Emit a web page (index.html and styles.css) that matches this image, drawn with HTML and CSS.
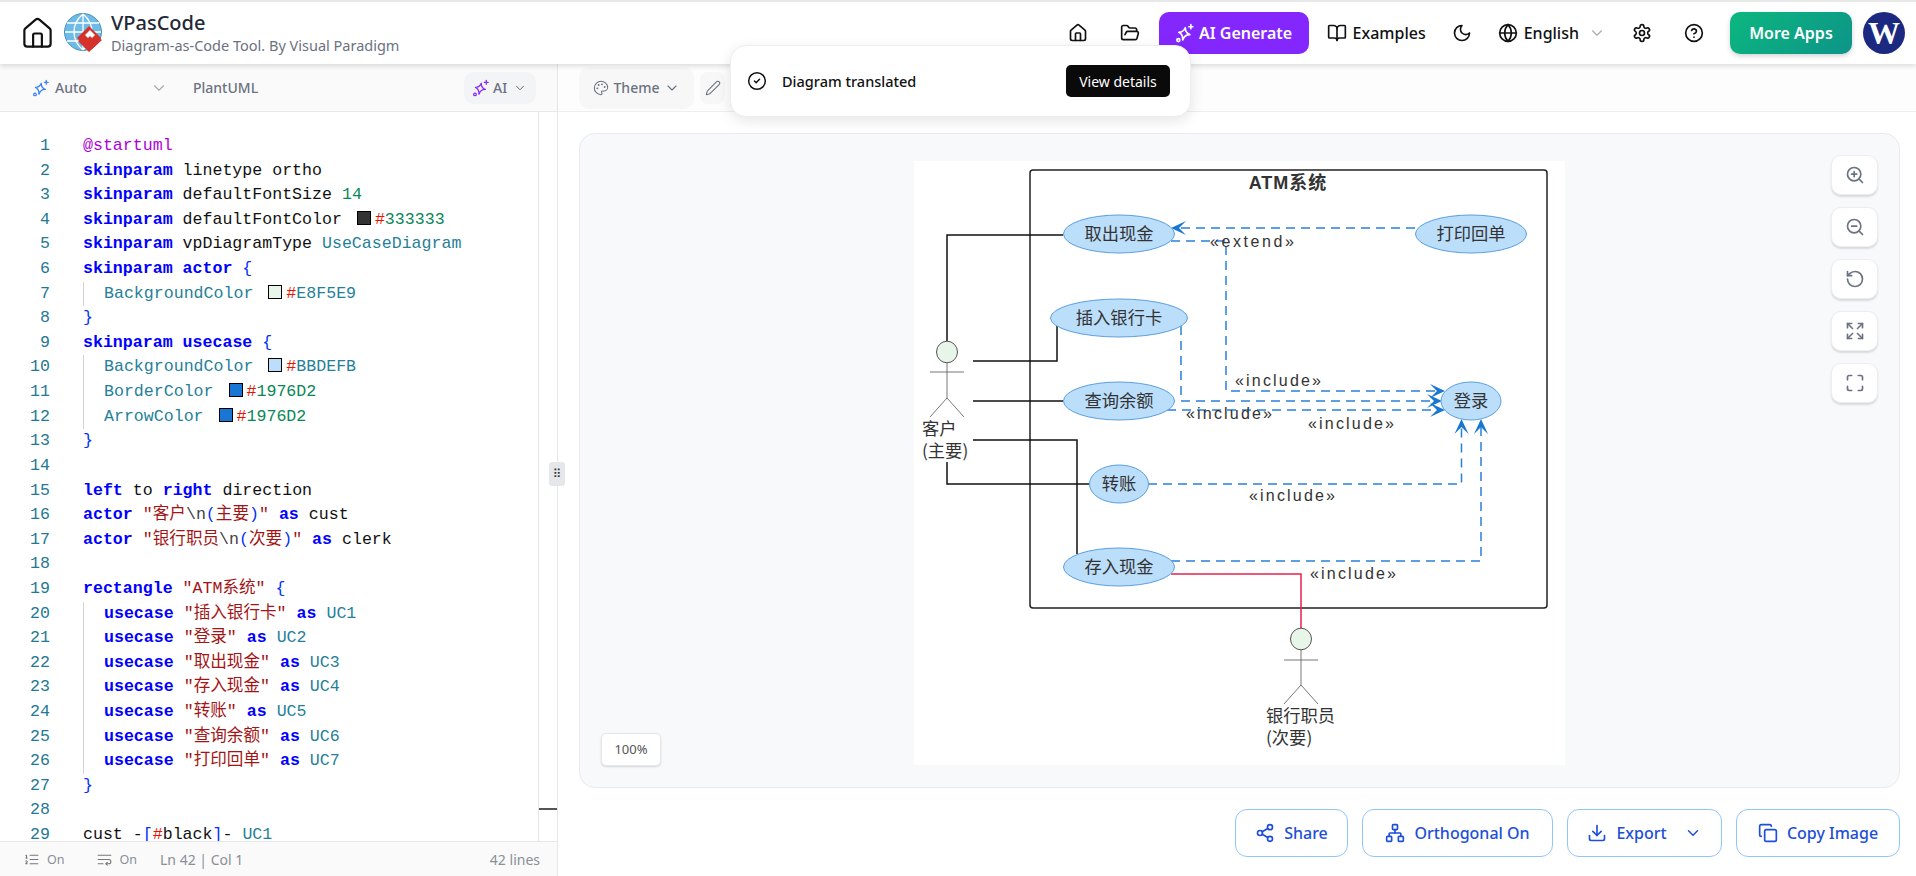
FILE: index.html
```html
<!DOCTYPE html>
<html lang="en">
<head>
    <meta charset="UTF-8">
    <meta name="viewport" content="width=device-width, initial-scale=1.0">
    <title>VPasCode</title>
    <link rel="stylesheet" href="styles.css">
</head>
<body>
    <svg class="sprite" xmlns="http://www.w3.org/2000/svg">
        <symbol id="i-house" viewBox="0 0 24 24"><path d="M15 21v-8a1 1 0 0 0-1-1h-4a1 1 0 0 0-1 1v8"/><path d="M3 10a2 2 0 0 1 .709-1.528l7-5.999a2 2 0 0 1 2.582 0l7 5.999A2 2 0 0 1 21 10v9a2 2 0 0 1-2 2H5a2 2 0 0 1-2-2z"/></symbol>
        <symbol id="i-folder" viewBox="0 0 24 24"><path d="m6 14 1.5-2.9A2 2 0 0 1 9.24 10H20a2 2 0 0 1 1.94 2.5l-1.54 6a2 2 0 0 1-1.95 1.5H4a2 2 0 0 1-2-2V5a2 2 0 0 1 2-2h3.9a2 2 0 0 1 1.69.9l.81 1.2a2 2 0 0 0 1.67.9H18a2 2 0 0 1 2 2v2"/></symbol>
        <symbol id="i-spark" viewBox="0 0 24 24"><path d="M11 5.5c.8 4.300 2.700 6.200 7 7-4.300.8-6.200 2.700-7 8-.8-5.300-2.700-7.200-6.500-8 3.800-.8 5.700-2.700 6.500-7z" transform="rotate(12 11 12)"/><path d="M19 2v5"/><path d="M16.500 4.500h5"/><circle cx="4" cy="20.500" r="1.800"/></symbol>
        <symbol id="i-book" viewBox="0 0 24 24"><path d="M12 7v14"/><path d="M3 18a1 1 0 0 1-1-1V4a1 1 0 0 1 1-1h5a4 4 0 0 1 4 4 4 4 0 0 1 4-4h5a1 1 0 0 1 1 1v13a1 1 0 0 1-1 1h-6a3 3 0 0 0-3 3 3 3 0 0 0-3-3z"/></symbol>
        <symbol id="i-moon" viewBox="0 0 24 24"><path d="M12 3a6 6 0 0 0 9 9 9 9 0 1 1-9-9Z"/></symbol>
        <symbol id="i-globe" viewBox="0 0 24 24"><circle cx="12" cy="12" r="10"/><path d="M12 2a14.500 14.500 0 0 0 0 20 14.500 14.500 0 0 0 0-20"/><path d="M2 12h20"/></symbol>
        <symbol id="i-gear" viewBox="0 0 24 24"><path d="M12.220 2h-.44a2 2 0 0 0-2 2v.18a2 2 0 0 1-1 1.730l-.43.25a2 2 0 0 1-2 0l-.15-.08a2 2 0 0 0-2.730.73l-.22.38a2 2 0 0 0 .73 2.730l.15.1a2 2 0 0 1 1 1.720v.51a2 2 0 0 1-1 1.740l-.15.09a2 2 0 0 0-.73 2.730l.22.38a2 2 0 0 0 2.730.73l.15-.08a2 2 0 0 1 2 0l.43.25a2 2 0 0 1 1 1.730V20a2 2 0 0 0 2 2h.44a2 2 0 0 0 2-2v-.18a2 2 0 0 1 1-1.730l.43-.25a2 2 0 0 1 2 0l.15.08a2 2 0 0 0 2.730-.73l.22-.39a2 2 0 0 0-.73-2.730l-.15-.08a2 2 0 0 1-1-1.740v-.5a2 2 0 0 1 1-1.740l.15-.09a2 2 0 0 0 .73-2.730l-.22-.38a2 2 0 0 0-2.730-.73l-.15.08a2 2 0 0 1-2 0l-.43-.25a2 2 0 0 1-1-1.730V4a2 2 0 0 0-2-2z"/><circle cx="12" cy="12" r="3"/></symbol>
        <symbol id="i-help" viewBox="0 0 24 24"><circle cx="12" cy="12" r="10"/><path d="M9.090 9a3 3 0 0 1 5.830 1c0 2-3 3-3 3"/><path d="M12 17h.01"/></symbol>
        <symbol id="i-chev" viewBox="0 0 24 24"><path d="m6 9 6 6 6-6"/></symbol>
        <symbol id="i-palette" viewBox="0 0 24 24"><circle cx="13.500" cy="6.500" r=".6"/><circle cx="17.500" cy="10.500" r=".6"/><circle cx="8.500" cy="7.500" r=".6"/><circle cx="6.500" cy="12.500" r=".6"/><path d="M12 2C6.500 2 2 6.500 2 12s4.500 10 10 10c.926 0 1.648-.746 1.648-1.688 0-.437-.18-.835-.437-1.125-.29-.289-.438-.652-.438-1.125a1.640 1.640 0 0 1 1.668-1.668h1.996c3.051 0 5.555-2.503 5.555-5.554C21.965 6.012 17.461 2 12 2z"/></symbol>
        <symbol id="i-pencil" viewBox="0 0 24 24"><path d="M21.174 6.812a1 1 0 0 0-3.986-3.987L3.842 16.174a2 2 0 0 0-.5.83l-1.321 4.352a.5.5 0 0 0 .623.622l4.353-1.320a2 2 0 0 0 .83-.497z"/></symbol>
        <symbol id="i-check" viewBox="0 0 24 24"><circle cx="12" cy="12" r="10"/><path d="m9 12 2 2 4-4"/></symbol>
        <symbol id="i-zoomin" viewBox="0 0 24 24"><circle cx="11" cy="11" r="8"/><path d="m21 21-4.300-4.300"/><path d="M11 8v6"/><path d="M8 11h6"/></symbol>
        <symbol id="i-zoomout" viewBox="0 0 24 24"><circle cx="11" cy="11" r="8"/><path d="m21 21-4.300-4.300"/><path d="M8 11h6"/></symbol>
        <symbol id="i-rotate" viewBox="0 0 24 24"><path d="M3 12a9 9 0 1 0 9-9 9.750 9.750 0 0 0-6.740 2.740L3 8"/><path d="M3 3v5h5"/></symbol>
        <symbol id="i-fit" viewBox="0 0 24 24"><path d="M3 3l6 6"/><path d="M3 8V3h5"/><path d="M21 3l-6 6"/><path d="M16 3h5v5"/><path d="M3 21l6-6"/><path d="M3 16v5h5"/><path d="M21 21l-6-6"/><path d="M21 16v5h-5"/></symbol>
        <symbol id="i-full" viewBox="0 0 24 24"><path d="M8 3H5a2 2 0 0 0-2 2v3"/><path d="M21 8V5a2 2 0 0 0-2-2h-3"/><path d="M3 16v3a2 2 0 0 0 2 2h3"/><path d="M16 21h3a2 2 0 0 0 2-2v-3"/></symbol>
        <symbol id="i-share" viewBox="0 0 24 24"><circle cx="18" cy="5" r="3"/><circle cx="6" cy="12" r="3"/><circle cx="18" cy="19" r="3"/><path d="m8.590 13.510 6.830 3.980"/><path d="m15.410 6.510-6.820 3.980"/></symbol>
        <symbol id="i-network" viewBox="0 0 24 24"><rect x="16" y="16" width="6" height="6" rx="1"/><rect x="2" y="16" width="6" height="6" rx="1"/><rect x="9" y="2" width="6" height="6" rx="1"/><path d="M5 16v-3a1 1 0 0 1 1-1h12a1 1 0 0 1 1 1v3"/><path d="M12 12V8"/></symbol>
        <symbol id="i-download" viewBox="0 0 24 24"><path d="M21 15v4a2 2 0 0 1-2 2H5a2 2 0 0 1-2-2v-4"/><path d="m7 10 5 5 5-5"/><path d="M12 15V3"/></symbol>
        <symbol id="i-copy" viewBox="0 0 24 24"><rect x="8" y="8" width="14" height="14" rx="2"/><path d="M4 16c-1.100 0-2-.9-2-2V4c0-1.100.9-2 2-2h10c1.100 0 2 .9 2 2"/></symbol>
        <symbol id="i-list" viewBox="0 0 24 24"><path d="M10 12h11"/><path d="M10 18h11"/><path d="M10 6h11"/><path d="M4 10h2"/><path d="M4 6h1v4"/><path d="M6 18H4c0-1 2-2 2-3s-1-1.500-2-1"/></symbol>
        <symbol id="i-wrap" viewBox="0 0 24 24"><path d="M3 6h18"/><path d="M3 12h15a3 3 0 1 1 0 6h-4"/><path d="m16 16-2 2 2 2"/><path d="M3 18h7"/></symbol>
    </svg>

    <header class="topbar">
        <svg class="ico homebig"><use href="#i-house"/></svg>
        <svg class="logo" viewBox="0 0 40 40">
            <circle cx="19" cy="19" r="18.500" fill="#6dbbe8" stroke="#4a8fb8"/>
            <path d="M1 19h36M3 10h32M3 28h32M19 1v36M19 1c-12 10-12 26 0 36M19 1c12 10 12 26 0 36" fill="none" stroke="#fff" stroke-width="1.300"/>
            <path d="M27 11l12 12-12 12-12-12z" fill="#d5322c" transform="translate(-2 2)"/>
            <path d="M25 39l-11-11 3-2 8 8 10-9 3 2z" fill="#d5322c"/>
            <path d="M21 22l5-5 5 5-3 3-2-2-2 2z" fill="#fff"/>
        </svg>
        <div class="brand">
            <div class="brand-name">VPasCode</div>
            <div class="brand-sub">Diagram-as-Code Tool. By Visual Paradigm</div>
        </div>
        <nav class="nav">
            <button class="navicon"><svg class="ico"><use href="#i-house"/></svg></button>
            <button class="navicon"><svg class="ico"><use href="#i-folder"/></svg></button>
            <button class="aibtn"><svg class="ico"><use href="#i-spark"/></svg>AI Generate</button>
            <button class="navtext"><svg class="ico"><use href="#i-book"/></svg>Examples</button>
            <button class="navicon"><svg class="ico"><use href="#i-moon"/></svg></button>
            <button class="navtext"><svg class="ico"><use href="#i-globe"/></svg>English<svg class="ico chev"><use href="#i-chev"/></svg></button>
            <button class="navicon"><svg class="ico"><use href="#i-gear"/></svg></button>
            <button class="navicon"><svg class="ico"><use href="#i-help"/></svg></button>
            <button class="morebtn">More Apps</button>
            <div class="avatar">W</div>
        </nav>
    </header>

    <main class="main">
        <section class="left">
            <div class="lefttools">
                <svg class="ico spark"><use href="#i-spark"/></svg>
                <span class="autolabel">Auto</span>
                <svg class="ico chev"><use href="#i-chev"/></svg>
                <span class="plantlabel">PlantUML</span>
                <span class="aipill"><svg class="ico sparkv"><use href="#i-spark"/></svg>AI<svg class="ico chev"><use href="#i-chev"/></svg></span>
            </div>
            <div class="editor">
                <div class="ln"><span class="no">1</span><span class="a">@startuml</span></div>
                <div class="ln"><span class="no">2</span><span class="k">skinparam</span> linetype ortho</div>
                <div class="ln"><span class="no">3</span><span class="k">skinparam</span> defaultFontSize <span class="n">14</span></div>
                <div class="ln"><span class="no">4</span><span class="k">skinparam</span> defaultFontColor <i class="sw s333"></i><span class="h">#</span><span class="n">333333</span></div>
                <div class="ln"><span class="no">5</span><span class="k">skinparam</span> vpDiagramType <span class="t">UseCaseDiagram</span></div>
                <div class="ln"><span class="no">6</span><span class="k">skinparam</span> <span class="k">actor</span> <span class="b">{</span></div>
                <div class="ln"><span class="no">7</span><span class="in"><span class="t">BackgroundColor</span> <i class="sw se8"></i><span class="h">#</span><span class="t">E8F5E9</span></span></div>
                <div class="ln"><span class="no">8</span><span class="b">}</span></div>
                <div class="ln"><span class="no">9</span><span class="k">skinparam</span> <span class="k">usecase</span> <span class="b">{</span></div>
                <div class="ln"><span class="no">10</span><span class="in"><span class="t">BackgroundColor</span> <i class="sw sbb"></i><span class="h">#</span><span class="t">BBDEFB</span></span></div>
                <div class="ln"><span class="no">11</span><span class="in"><span class="t">BorderColor</span> <i class="sw s19"></i><span class="h">#</span><span class="n">1976D2</span></span></div>
                <div class="ln"><span class="no">12</span><span class="in"><span class="t">ArrowColor</span> <i class="sw s19"></i><span class="h">#</span><span class="n">1976D2</span></span></div>
                <div class="ln"><span class="no">13</span><span class="b">}</span></div>
                <div class="ln"><span class="no">14</span></div>
                <div class="ln"><span class="no">15</span><span class="k">left</span> to <span class="k">right</span> direction</div>
                <div class="ln"><span class="no">16</span><span class="k">actor</span> <span class="s">"客户<span class="e">\n</span><span class="b">(</span>主要<span class="b">)</span>"</span> <span class="k">as</span> cust</div>
                <div class="ln"><span class="no">17</span><span class="k">actor</span> <span class="s">"银行职员<span class="e">\n</span><span class="b">(</span>次要<span class="b">)</span>"</span> <span class="k">as</span> clerk</div>
                <div class="ln"><span class="no">18</span></div>
                <div class="ln"><span class="no">19</span><span class="k">rectangle</span> <span class="s">"ATM系统"</span> <span class="b">{</span></div>
                <div class="ln"><span class="no">20</span><span class="in"><span class="k">usecase</span> <span class="s">"插入银行卡"</span> <span class="k">as</span> <span class="t">UC1</span></span></div>
                <div class="ln"><span class="no">21</span><span class="in"><span class="k">usecase</span> <span class="s">"登录"</span> <span class="k">as</span> <span class="t">UC2</span></span></div>
                <div class="ln"><span class="no">22</span><span class="in"><span class="k">usecase</span> <span class="s">"取出现金"</span> <span class="k">as</span> <span class="t">UC3</span></span></div>
                <div class="ln"><span class="no">23</span><span class="in"><span class="k">usecase</span> <span class="s">"存入现金"</span> <span class="k">as</span> <span class="t">UC4</span></span></div>
                <div class="ln"><span class="no">24</span><span class="in"><span class="k">usecase</span> <span class="s">"转账"</span> <span class="k">as</span> <span class="t">UC5</span></span></div>
                <div class="ln"><span class="no">25</span><span class="in"><span class="k">usecase</span> <span class="s">"查询余额"</span> <span class="k">as</span> <span class="t">UC6</span></span></div>
                <div class="ln"><span class="no">26</span><span class="in"><span class="k">usecase</span> <span class="s">"打印回单"</span> <span class="k">as</span> <span class="t">UC7</span></span></div>
                <div class="ln"><span class="no">27</span><span class="b">}</span></div>
                <div class="ln"><span class="no">28</span></div>
                <div class="ln"><span class="no">29</span>cust -<span class="b">[</span><span class="h">#</span>black<span class="b">]</span>- <span class="t">UC1</span></div>
                <div class="minimap"></div>
                <div class="miniline"></div>
            </div>
            <div class="statusbar">
                <svg class="ico"><use href="#i-list"/></svg><span class="on">On</span>
                <svg class="ico wrapico"><use href="#i-wrap"/></svg><span class="on">On</span>
                <span class="pos">Ln 42 | Col 1</span>
                <span class="count">42 lines</span>
            </div>
            <div class="handle">⠿</div>
        </section>

        <section class="right">
            <div class="righttools">
                <button class="themebtn"><svg class="ico"><use href="#i-palette"/></svg>Theme<svg class="ico chev"><use href="#i-chev"/></svg></button>
                <button class="penbtn"><svg class="ico"><use href="#i-pencil"/></svg></button>
            </div>
            <div class="canvas">
                <svg class="diagram" viewBox="915 160 651 604" xmlns="http://www.w3.org/2000/svg">
                    <rect x="1031" y="169" width="517" height="438" rx="3" class="sysbox"/>
                    <text x="1289" y="188" class="systitle" text-anchor="middle">ATM系统</text>

                    <path class="assoc" d="M948 340V234H1064"/>
                    <path class="assoc" d="M974 360H1058V325"/>
                    <path class="assoc" d="M974 400H1064"/>
                    <path class="assoc" d="M974 439H1078V553"/>
                    <path class="assoc" d="M948 461V483H1090"/>
                    <path class="assoc red" d="M1172 573H1302V627"/>

                    <path class="dash" d="M1416 227H1180"/>
                    <path class="dash" d="M1172 240H1227V390H1438"/>
                    <path class="dash" d="M1182 325V400H1436"/>
                    <path class="dash" d="M1168 409H1438"/>
                    <path class="dash" d="M1149 483H1462.500V426"/>
                    <path class="dash" d="M1172 560H1482V426"/>

                    <path class="head" d="M1172 227l15-7-7 7 7 7z"/>
                    <path class="head" d="M1446 390l-15-7 7 7-7 7z"/>
                    <path class="head" d="M1443 400l-15-7 7 7-7 7z"/>
                    <path class="head" d="M1446 409l-15-7 7 7-7 7z"/>
                    <path class="head" d="M1462.500 418l-7 15 7-7 7 7z"/>
                    <path class="head" d="M1482 418l-7 15 7-7 7 7z"/>

                    <ellipse class="uc" cx="1120" cy="233" rx="55.500" ry="19"/>
                    <ellipse class="uc" cx="1472" cy="233" rx="55.500" ry="19"/>
                    <ellipse class="uc" cx="1120" cy="317" rx="68.500" ry="19"/>
                    <ellipse class="uc" cx="1120" cy="400" rx="55.500" ry="19"/>
                    <ellipse class="uc" cx="1472" cy="400" rx="30" ry="19"/>
                    <ellipse class="uc" cx="1120" cy="483" rx="29.500" ry="19"/>
                    <ellipse class="uc" cx="1120" cy="566" rx="55.500" ry="19"/>

                    <text class="uct" x="1120" y="239" text-anchor="middle">取出现金</text>
                    <text class="uct" x="1472" y="239" text-anchor="middle">打印回单</text>
                    <text class="uct" x="1120" y="323" text-anchor="middle">插入银行卡</text>
                    <text class="uct" x="1120" y="406" text-anchor="middle">查询余额</text>
                    <text class="uct" x="1472" y="406" text-anchor="middle">登录</text>
                    <text class="uct" x="1120" y="489" text-anchor="middle">转账</text>
                    <text class="uct" x="1120" y="572" text-anchor="middle">存入现金</text>

                    <text class="lbl" x="1211" y="246" textLength="84">«extend»</text>
                    <text class="lbl" x="1236" y="385" textLength="86">«include»</text>
                    <text class="lbl" x="1187" y="418" textLength="86">«include»</text>
                    <text class="lbl" x="1309" y="428" textLength="86">«include»</text>
                    <text class="lbl" x="1250" y="500" textLength="86">«include»</text>
                    <text class="lbl" x="1311" y="578" textLength="86">«include»</text>

                    <ellipse class="head-a" cx="948" cy="351" rx="10.500" ry="10.800"/>
                    <path class="stick" d="M948 362V397M931 371H965M931 416L948 397L965 416"/>
                    <text class="uct" x="923" y="434">客户</text>
                    <text class="uct" x="923" y="456">(主要)</text>

                    <ellipse class="head-a" cx="1302" cy="638" rx="10.500" ry="10.800"/>
                    <path class="stick" d="M1302 649V684M1285 659H1319M1285 703L1302 684L1319 703"/>
                    <text class="uct" x="1267" y="721">银行职员</text>
                    <text class="uct" x="1267" y="743">(次要)</text>
                </svg>
                <div class="zoomctl">
                    <button class="zbtn"><svg class="ico"><use href="#i-zoomin"/></svg></button>
                    <button class="zbtn"><svg class="ico"><use href="#i-zoomout"/></svg></button>
                    <button class="zbtn"><svg class="ico"><use href="#i-rotate"/></svg></button>
                    <button class="zbtn"><svg class="ico"><use href="#i-fit"/></svg></button>
                    <button class="zbtn"><svg class="ico"><use href="#i-full"/></svg></button>
                </div>
                <div class="pct">100%</div>
            </div>
            <div class="actions">
                <button class="act share"><svg class="ico"><use href="#i-share"/></svg>Share</button>
                <button class="act ortho"><svg class="ico"><use href="#i-network"/></svg>Orthogonal On</button>
                <button class="act export"><svg class="ico"><use href="#i-download"/></svg>Export<svg class="ico chevb"><use href="#i-chev"/></svg></button>
                <button class="act copy"><svg class="ico"><use href="#i-copy"/></svg>Copy Image</button>
            </div>
        </section>
    </main>

    <div class="toast">
        <svg class="ico"><use href="#i-check"/></svg>
        <span class="toastmsg">Diagram translated</span>
        <button class="toastbtn">View details</button>
    </div>
</body>
</html>
```

FILE: styles.css
```css
* {
    box-sizing: border-box;
}

html, body {
    margin: 0;
    height: 876px;
    overflow: hidden;
}

body {
    font-family: "Noto Sans", "Noto Sans CJK SC", sans-serif;
    color: #111;
    background: #fff;
}

button {
    font-family: inherit;
    border: 0;
    background: none;
    cursor: pointer;
    padding: 0;
}

.sprite {
    display: none;
}

.ico {
    width: 20px;
    height: 20px;
    flex: none;
    fill: none;
    stroke: currentColor;
    stroke-width: 2;
    stroke-linecap: round;
    stroke-linejoin: round;
}

/* top bar */
.topbar {
    height: 64px;
    display: flex;
    align-items: center;
    padding-left: 20px;
    border-top: 2px solid #e8e8e8;
    box-shadow: 0 2px 5px rgba(0, 0, 0, .14);
    position: relative;
    z-index: 2;
    background: #fff;
}

.homebig {
    width: 35px;
    height: 35px;
    stroke-width: 1.500;
    stroke: #111;
}

.logo {
    width: 40px;
    height: 40px;
    margin-left: 9px;
}

.brand {
    margin-left: 7px;
}

.brand-name {
    font-size: 20px;
    line-height: 24px;
    font-weight: 500;
    color: #1f2937;
}

.brand-sub {
    font-size: 14.500px;
    line-height: 20px;
    color: #6b7280;
}

.nav {
    margin-left: auto;
    display: flex;
    align-items: center;
    padding-right: 11px;
    font-weight: 600;
    font-size: 16px;
}

.navicon {
    width: 52px;
    height: 42px;
    display: flex;
    align-items: center;
    justify-content: center;
    color: #111;
}

.navtext {
    height: 42px;
    display: flex;
    align-items: center;
    gap: 6px;
    padding: 0 10px;
    font-size: 16px;
    font-weight: 500;
    color: #111;
}

.navtext .chev {
    width: 18px;
    height: 18px;
    margin-left: 3px;
    color: #aaa;
    stroke-width: 1.500;
}

.aibtn {
    width: 150px;
    height: 42px;
    margin: 0 8px 0 3px;
    display: flex;
    align-items: center;
    justify-content: center;
    gap: 4px;
    border-radius: 10px;
    background: #8427ff;
    color: #fff;
    font-size: 16px;
    font-weight: 600;
}

.morebtn {
    width: 122px;
    height: 42px;
    margin-left: 10px;
    border-radius: 10px;
    color: #fff;
    font-size: 16px;
    font-weight: 600;
    background: linear-gradient(135deg, #0cb77f, #0d9488);
    box-shadow: 0 2px 5px rgba(0, 0, 0, .18);
}

.avatar {
    width: 42px;
    height: 42px;
    margin-left: 11px;
    border-radius: 50%;
    background: #1b2a80;
    color: #fff;
    font-family: "Liberation Serif", serif;
    font-weight: 700;
    font-size: 32px;
    line-height: 42px;
    text-align: center;
}

/* panels */
.main {
    display: flex;
    height: 812px;
}

.left {
    width: 558px;
    flex: none;
    display: flex;
    flex-direction: column;
    border-right: 1px solid #e5e7eb;
    position: relative;
}

.lefttools {
    height: 48px;
    flex: none;
    display: flex;
    align-items: center;
    padding: 0 21px 0 32px;
    background: #fafafa;
    border-bottom: 1px solid #e8e8e8;
    font-size: 14px;
    font-weight: 500;
    color: #6b7280;
}

.lefttools .ico {
    width: 18px;
    height: 18px;
}

.spark {
    color: #3b82f6;
    stroke-width: 1.700;
}

.autolabel {
    margin-left: 5px;
    width: 95px;
}

.lefttools .chev {
    color: #aaa;
    stroke-width: 1.500;
}

.plantlabel {
    margin-left: 25px;
}

.aipill {
    margin-left: auto;
    width: 72px;
    height: 32px;
    display: flex;
    align-items: center;
    gap: 3px;
    padding-left: 8px;
    border-radius: 10px;
    background: #f3f4f6;
}

.sparkv {
    color: #8b2cf5;
    stroke-width: 1.700;
}

.aipill .chev {
    width: 14px;
    height: 14px;
    margin-left: 3px;
    color: #555;
}

.editor {
    flex: 1;
    overflow: hidden;
    position: relative;
    padding-top: 22px;
    font-family: "Liberation Mono", "Noto Sans CJK SC", monospace;
    font-size: 16.600px;
    color: #111;
}

.ln {
    height: 24.620px;
    line-height: 24.620px;
    padding-left: 83px;
    position: relative;
    white-space: pre;
}

.no {
    position: absolute;
    left: 0;
    width: 50px;
    text-align: right;
    color: #237893;
}

.in {
    display: inline-block;
    height: 100%;
    padding-left: 20px;
    border-left: 1px solid #d4d4d4;
}

.k {
    color: #0000ff;
    font-weight: 700;
}

.a {
    color: #af00db;
}

.t {
    color: #267f99;
}

.n {
    color: #098658;
}

.h {
    color: #e51400;
}

.b {
    color: #0431fa;
}

.s {
    color: #a31515;
}

.e {
    color: #444;
}

.sw {
    display: inline-block;
    width: 14px;
    height: 14px;
    margin: 0 4px 0 5px;
    border: 1px solid #000;
    vertical-align: -1px;
}

.s333 {
    background: #333333;
}

.se8 {
    background: #e8f5e9;
}

.sbb {
    background: #bbdefb;
}

.s19 {
    background: #1976d2;
}

.minimap {
    position: absolute;
    top: 0;
    bottom: 0;
    left: 538px;
    width: 1px;
    background: #e6e6e6;
}

.miniline {
    position: absolute;
    top: 696px;
    left: 539px;
    width: 18px;
    height: 2px;
    background: #555;
}

.statusbar {
    height: 35px;
    flex: none;
    display: flex;
    align-items: center;
    padding: 0 17px 0 23px;
    background: #fafafa;
    border-top: 1px solid #e5e7eb;
    font-size: 14px;
    color: #8a8f98;
}

.statusbar .ico {
    width: 17px;
    height: 17px;
    stroke-width: 1.500;
    color: #777;
}

.on {
    margin-left: 7px;
    font-size: 12.500px;
}

.wrapico {
    margin-left: 31px;
}

.pos {
    margin-left: 23px;
}

.count {
    margin-left: auto;
}

.handle {
    position: absolute;
    left: 549px;
    top: 398px;
    width: 16px;
    height: 24px;
    border-radius: 3px;
    background: #e5e7eb;
    font-size: 12px;
    line-height: 24px;
    text-align: center;
    color: #333;
    font-family: "DejaVu Sans", sans-serif;
    z-index: 1;
}

.right {
    flex: 1;
    display: flex;
    flex-direction: column;
    min-width: 0;
}

.righttools {
    height: 48px;
    flex: none;
    display: flex;
    align-items: center;
    gap: 6px;
    padding-left: 21px;
    background: #fdfdfd;
    border-bottom: 1px solid #eee;
}

.themebtn {
    width: 115px;
    height: 42px;
    display: flex;
    align-items: center;
    justify-content: center;
    gap: 5px;
    border-radius: 10px;
    background: #f7f7f8;
    color: #6b7280;
    font-size: 14px;
    font-weight: 500;
}

.themebtn .ico {
    width: 16px;
    height: 16px;
    stroke-width: 1.600;
}

.penbtn {
    width: 25px;
    height: 32px;
    display: flex;
    align-items: center;
    justify-content: center;
    border-radius: 8px;
    background: #f7f7f8;
    color: #6b7280;
}

.penbtn .ico {
    width: 16px;
    height: 16px;
    stroke-width: 1.600;
}

.canvas {
    height: 655px;
    margin: 21px 16px 0 21px;
    flex: none;
    display: flex;
    justify-content: center;
    padding-top: 27px;
    border: 1px solid #e8eaef;
    border-radius: 16px;
    background: #f8f9fb;
    position: relative;
}

.diagram {
    width: 651px;
    height: 604px;
    background: #fff;
    flex: none;
}

.sysbox {
    fill: none;
    stroke: #222;
    stroke-width: 1.500;
}

.systitle {
    font-family: "Liberation Sans", "Noto Sans CJK SC", sans-serif;
    font-weight: 700;
    font-size: 18px;
    letter-spacing: 1px;
    fill: #333;
}

.assoc {
    fill: none;
    stroke: #111;
    stroke-width: 1.500;
}

.red {
    stroke: #e8204f;
}

.dash {
    fill: none;
    stroke: #2a80d8;
    stroke-width: 1.500;
    stroke-dasharray: 9 6;
}

.head {
    fill: #1976d2;
}

.uc {
    fill: #bbdefb;
    stroke: #5a9fe0;
    stroke-width: 1;
}

.uct {
    font-family: "Noto Sans CJK SC", sans-serif;
    font-size: 17.300px;
    fill: #333;
}

.lbl {
    font-family: "Liberation Sans", sans-serif;
    font-size: 16px;
    fill: #333;
}

.head-a {
    fill: #e8f5e9;
    stroke: #555;
    stroke-width: 1;
}

.stick {
    fill: none;
    stroke: #777;
    stroke-width: 1;
}

.zoomctl {
    position: absolute;
    top: 21px;
    right: 21px;
    display: flex;
    flex-direction: column;
    gap: 12px;
}

.zbtn {
    width: 47px;
    height: 40px;
    display: flex;
    align-items: center;
    justify-content: center;
    border-radius: 10px;
    background: #fff;
    border: 1px solid #eceef1;
    box-shadow: 0 1.500px 2px rgba(0, 0, 0, .12);
    color: #6b7280;
}

.pct {
    position: absolute;
    left: 21px;
    bottom: 21px;
    width: 60px;
    height: 33px;
    border-radius: 5px;
    background: #fff;
    border: 1px solid #e5e7eb;
    box-shadow: 0 1px 2px rgba(0, 0, 0, .15);
    font-size: 13px;
    line-height: 31px;
    text-align: center;
    color: #555;
}

.actions {
    display: flex;
    justify-content: flex-end;
    gap: 14px;
    margin: 21px 16px 0 0;
}

.act {
    height: 48px;
    display: flex;
    align-items: center;
    justify-content: center;
    gap: 9px;
    border: 1px solid #93c5fd;
    border-radius: 12px;
    background: #fff;
    color: #1d4fd8;
    font-size: 16px;
    font-weight: 500;
}

.share {
    width: 113px;
}

.ortho {
    width: 191px;
}

.export {
    width: 155px;
}

.copy {
    width: 164px;
}

.chevb {
    margin-left: 8px;
    width: 18px;
    height: 18px;
}

.toast {
    position: absolute;
    left: 730px;
    top: 45px;
    width: 461px;
    height: 72px;
    display: flex;
    align-items: center;
    padding: 0 20px 0 16px;
    border-radius: 16px;
    background: #fff;
    border: 1px solid #eee;
    box-shadow: 0 4px 14px rgba(0, 0, 0, .1);
    z-index: 5;
}

.toast .ico {
    stroke-width: 1.800;
}

.toastmsg {
    margin-left: 15px;
    font-size: 14.500px;
    font-weight: 500;
    color: #111;
}

.toastbtn {
    margin-left: auto;
    width: 104px;
    height: 32px;
    border-radius: 5px;
    background: #0a0a0a;
    color: #fff;
    font-size: 14px;
}
```
